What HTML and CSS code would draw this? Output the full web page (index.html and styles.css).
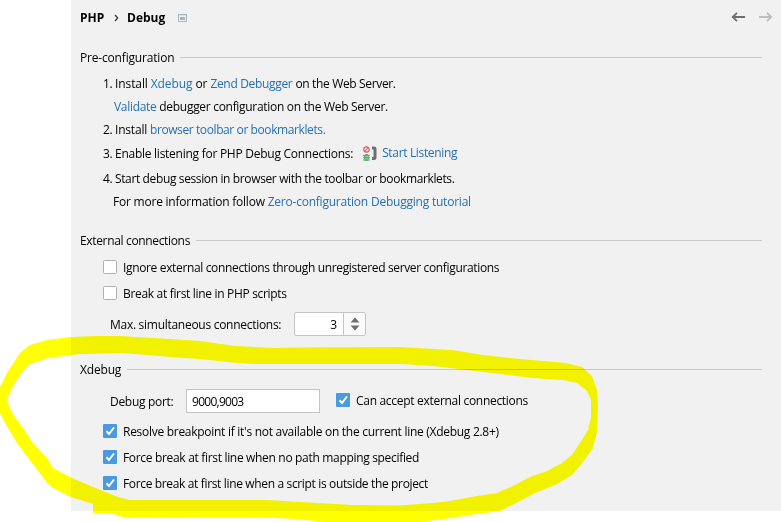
FILE: index.html
```
<!DOCTYPE html>
<html lang="en">
<head>
<meta charset="utf-8">
<title>PHP Debug settings</title>
<link rel="stylesheet" href="styles.css">
</head>
<body>
<main class="panel">
  <header class="header">
    <b class="crumb-root">PHP</b>
    <svg class="chevron" width="5" height="8" viewBox="0 0 5 8"><path d="M1 1l2.700 3L1 7" fill="none" stroke="#333" stroke-width="1.2"/></svg>
    <b class="crumb-page">Debug</b>
    <svg class="scope" width="9" height="8" viewBox="0 0 9 8"><path d="M.5.5h8v7h-8z" fill="none" stroke="#a9b4bb"/><path d="M0 0h9v1.300H0zM2 3h5v3H2z" fill="#a9b4bb"/></svg>
    <svg class="nav" width="42" height="10" viewBox="0 0 42 10" fill="none" stroke-width="1.8"><path d="M14 5H2M6 .8L1.700 5 6 9.200" stroke="#6e6e6e"/><path d="M28 5h12M36 .8L40.300 5 36 9.200" stroke="#bdbdbd"/></svg>
  </header>

  <section class="pre">
    <h2 class="title"><span class="t18">Pre-configuration</span></h2>
    <p class="step first"><i>1.</i><span class="t10">Install <a>Xdebug</a> or <a class="t32">Zend Debugger</a></span><span class="t35 server"> on the Web Server.</span></p>
    <p class="step sub validate"><span class="t30"><a>Validate</a> debugger configuration on the Web Server.</span></p>
    <p class="step"><i>2.</i><span class="t20">Install <a class="t40">browser toolbar or bookmarklets.</a></span></p>
    <p class="step tall"><i>3.</i><span class="t26">Enable listening for PHP Debug Connections:</span>
      <svg class="phone" width="14" height="16" viewBox="0 0 14 16"><circle cx="3.5" cy="3.5" r="2.7" fill="none" stroke="#e05562" stroke-width="1.2"/><path d="M1.600 5.400l3.800-3.800" stroke="#e05562" stroke-width="1.1"/><ellipse cx="3.5" cy="11.5" rx="2.4" ry="3.4" fill="#59a869"/><path d="M0 9.500h7M0 11.700h7M0 14h7" stroke="#59a869"/><path d="M2 10.600h3M2 12.900h3" stroke="#d9eadc" stroke-width=".6"/><path d="M9 .5h2Q13.500.5 13.500 3v8.500q0 2.500-2.500 2.500H9v-3h1.500V3.500H9z" fill="#6e6e6e"/></svg>
      <a class="start t34">Start Listening</a></p>
    <p class="step tall"><i>4.</i><span class="t37">Start debug session in browser with the toolbar or bookmarklets.</span></p>
    <p class="step sub last"><span class="t22">For more information follow <a>Zero-configuration Debugging tutorial</a></span></p>
  </section>

  <section class="external">
    <h2 class="title"><span class="t34">External connections</span></h2>
    <label class="check"><svg class="box" viewBox="0 0 14 14"><rect class="off" x=".5" y=".5" width="13" height="13" rx="1"/></svg><span class="t35">Ignore external connections through unregistered server configurations</span></label>
    <label class="check"><svg class="box" viewBox="0 0 14 14"><rect class="off" x=".5" y=".5" width="13" height="13" rx="1"/></svg><span class="t32">Break at first line in PHP scripts</span></label>
    <div class="field"><span class="caption t28">Max. simultaneous connections:</span>
      <div class="spinner"><div class="num">3</div><div class="arrows"><svg width="10" height="14" viewBox="0 0 10 14" fill="#6e6e6e"><path d="M5 .5L9.500 5.500H.5zM5 13.500L9.500 8.500H.5z"/></svg></div></div></div>
  </section>

  <section class="xdebug">
    <h2 class="title"><span class="t18">Xdebug</span></h2>
    <div class="field port-row"><span class="caption port t30">Debug port:</span><div class="input"><span>9000,9003</span></div>
      <label class="check accept"><svg class="box" viewBox="0 0 14 14"><rect class="on" width="14" height="14" rx="1"/><path class="tick" d="M3.500 7.300L6 10l5-6.500"/></svg><span class="t30">Can accept external connections</span></label></div>
    <label class="check"><svg class="box" viewBox="0 0 14 14"><rect class="on" width="14" height="14" rx="1"/><path class="tick" d="M3.500 7.300L6 10l5-6.500"/></svg><span class="t28">Resolve breakpoint if it's not available on the current line (Xdebug 2.8+)</span></label>
    <label class="check"><svg class="box" viewBox="0 0 14 14"><rect class="on" width="14" height="14" rx="1"/><path class="tick" d="M3.500 7.300L6 10l5-6.500"/></svg><span class="t32">Force break at first line when no path mapping specified</span></label>
    <label class="check"><svg class="box" viewBox="0 0 14 14"><rect class="on" width="14" height="14" rx="1"/><path class="tick" d="M3.500 7.300L6 10l5-6.500"/></svg><span class="t35">Force break at first line when a script is outside the project</span></label>
  </section>
</main>
<svg class="marker" width="781" height="522" viewBox="0 0 781 522"><path fill="#ff0" fill-rule="evenodd" d="M71 337L95 336 120 336 170 339 200 341 235 346 275 348 297 347.500 400 347 452 350 483 355 520 359 566 363 582 367 592 376 597 390 598 405 597 432 593 448 583 462 572 475 557 484 535 493 518 502 500 511 477 514 443 519 420 522H325L297 519 267 517.500 135 517 130 518 123 517 113 514 93 513V504L71 497 53 488 47 483 39 472 32 463 17 443 5 423 0 413V387L7 373 20 353 30 345 47 340ZM47 358L80 354 123 353 153 355.500 170 357 200 359 237 363 253 364H403L433 366 467 370 500 374 533 378 563 380 577 383 587 391 591 400V417L588 430 580 443 572 455 562 463 547 471 530 477 513 486 497 493 477 496 450 501 433 503 400 505.500 353 505 327 503.500 267 500H130L118 497 93 487 72 478 53 468 47 458 33 443 23 428 12 413 7 400 12 388 20 375 28 365Z"/></svg>
</body>
</html>
```
FILE: styles.css
```
* { box-sizing: border-box; }
body {
  margin: 0;
  width: 781px;
  height: 522px;
  position: relative;
  overflow: hidden;
  background: #fff;
  color: #000;
  font: 12px/16px "Open Sans", "Noto Sans", sans-serif;
}
.panel { margin-left: 71px; width: 710px; height: 511px; background: #f1f1f1; white-space: nowrap; }

/* Header */
.header { display: flex; align-items: center; height: 35px; padding: 0 8px 0 9px; }
.crumb-root { width: 34px; }
.crumb-page { margin-left: 8px; width: 37px; }
.scope { margin-left: 14px; }
.nav { margin: -1px 0 0 auto; }

/* Section headings */
.title { display: flex; align-items: center; gap: 6px; height: 26px; margin: 0 19px 0 9px; font-size: 12px; font-weight: 400; }
.title::after { content: ""; flex: 1; height: 1px; background: #c9c9c9; }
.title span { padding-top: 2px; }
.pre { padding-top: 9px; }
.external { padding-top: 15px; }
.xdebug { padding-top: 14px; }

/* Numbered steps */
.step { display: flex; align-items: center; height: 23px; margin: 0 0 0 32px; }
.first { margin-top: 2px; }
.step i { width: 12px; font-style: normal; letter-spacing: -.3px; }
.sub { padding-left: 10px; }
.validate { padding-left: 11px; }
.tall { height: 25px; }
.last { height: 21px; }
.server { margin-left: 3px; }
.phone { margin-left: 10px; }
.start { margin: -2px 0 0 5px; }
a { color: #2470b3; }

/* Checkboxes */
.check { display: flex; align-items: center; height: 26px; padding-left: 32px; gap: 6px; }
.check span { padding-top: 2px; }
.external .check:first-of-type { margin-top: 1px; }
.box { width: 14px; height: 14px; flex: none; }
.off { fill: #fff; stroke: #b0b0b0; }
.on { fill: #4a9ae2; }
.tick { fill: none; stroke: #fff; stroke-width: 2; }

/* Fields */
.field { display: flex; align-items: center; height: 36px; padding-left: 39px; }
.caption { width: 184px; padding-top: 2px; }
.port { width: 76px; }
.port-row { padding-top: 2px; }
.spinner { display: flex; width: 72px; height: 24px; border: 1px solid #c4c4c4; border-radius: 2px; background: #fff; }
.num { width: 49px; padding: 4px 6px 0 0; border-right: 1px solid #c4c4c4; text-align: right; }
.arrows { display: flex; flex: 1; align-items: center; justify-content: center; background: #fafafa; }
.input { width: 134px; height: 24px; padding: 4px 0 0 5px; border: 1px solid #c4c4c4; background: #fff; letter-spacing: -.72px; }
.accept { margin-top: -2px; padding-left: 16px; }

/* Tracking */
.t10 { letter-spacing: -.1px; }
.t18 { letter-spacing: -.18px; }
.t20 { letter-spacing: -.2px; }
.t22 { letter-spacing: -.22px; }
.t26 { letter-spacing: -.26px; }
.t28 { letter-spacing: -.28px; }
.t30 { letter-spacing: -.3px; }
.t32 { letter-spacing: -.32px; }
.t34 { letter-spacing: -.34px; }
.t35 { letter-spacing: -.35px; }
.t37 { letter-spacing: -.37px; }
.t40 { letter-spacing: -.4px; }

/* Highlighter stroke laid over the panel */
.marker { position: absolute; left: 0; top: 0; mix-blend-mode: multiply; pointer-events: none; }
```
